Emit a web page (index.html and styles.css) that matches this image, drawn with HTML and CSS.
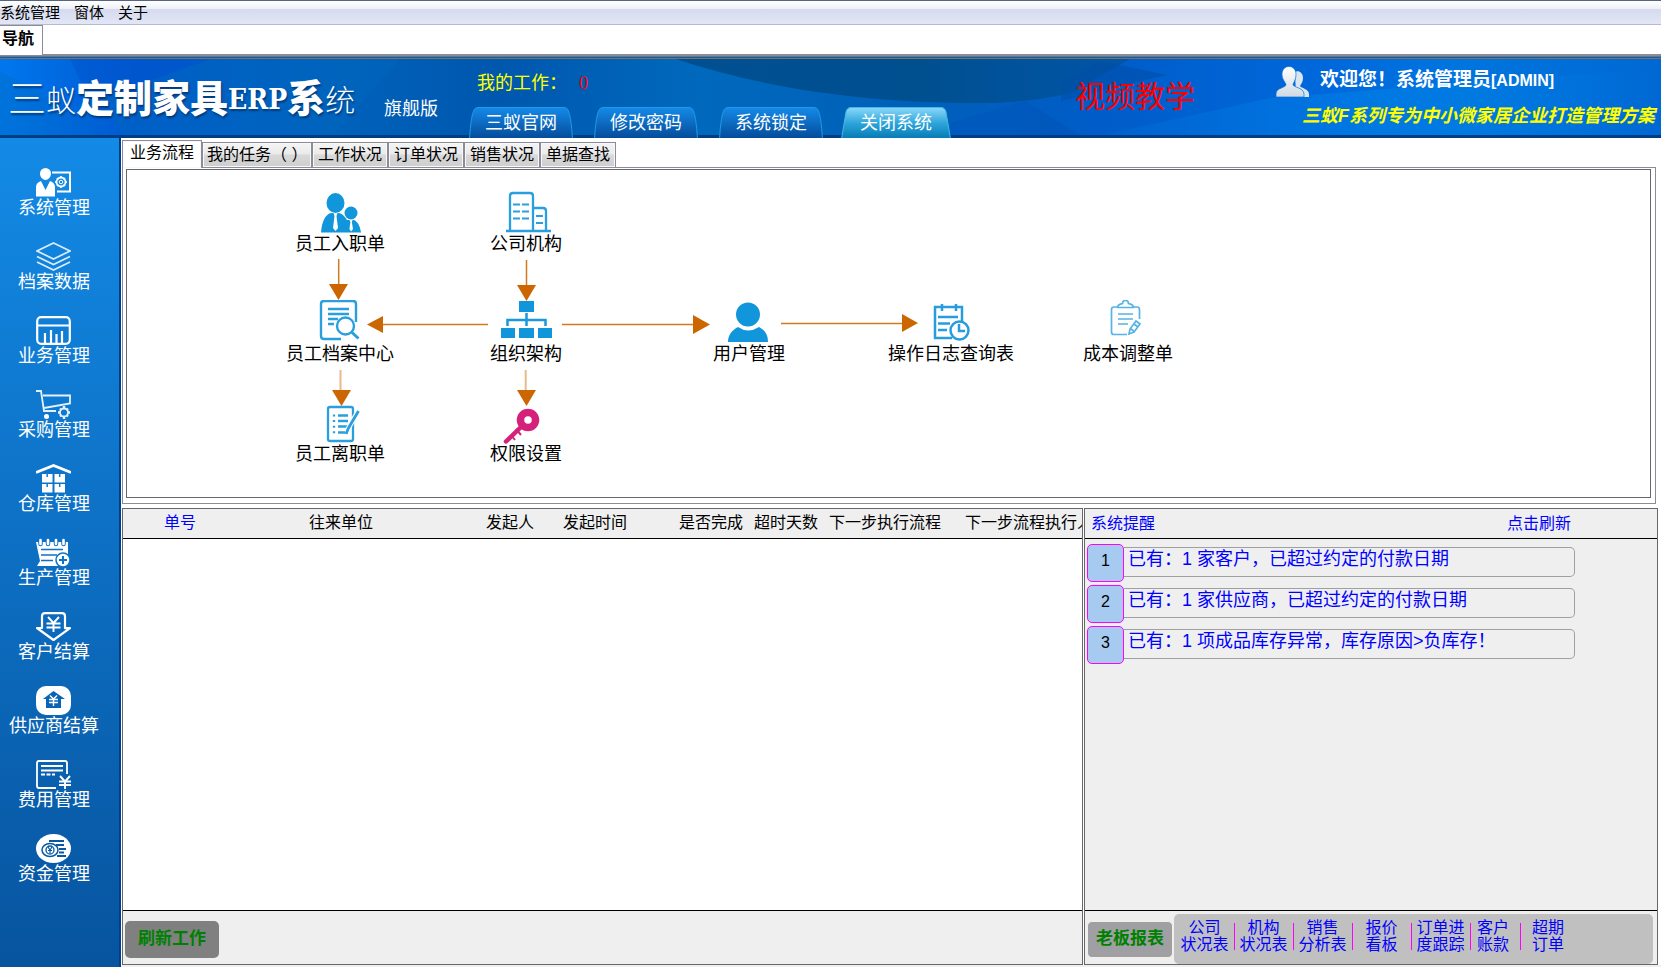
FILE: index.html
```html
<!DOCTYPE html>
<html lang="zh-CN">
<head>
<meta charset="utf-8">
<title>三蚁定制家具ERP系统</title>
<link rel="stylesheet" href="styles.css">
</head>
<body>
<nav class="menubar">
  <button type="button">系统管理</button>
  <button type="button">窗体</button>
  <button type="button">关于</button>
</nav>
<div class="window-tabs"><button type="button" class="window-tab">导航</button></div>

<header class="banner">
  <svg class="banner-art" viewBox="0 0 1661 79" preserveAspectRatio="none" aria-hidden="true">
    <defs>
      <linearGradient id="base"><stop offset="0" stop-color="#0077ee"/><stop offset=".08" stop-color="#0059d0"/><stop offset=".2" stop-color="#0062bc"/><stop offset=".3" stop-color="#0057ae"/><stop offset=".42" stop-color="#0069bd"/><stop offset=".55" stop-color="#0060b8"/><stop offset=".66" stop-color="#005cc8"/><stop offset=".8" stop-color="#0068dc"/><stop offset=".88" stop-color="#0075df"/><stop offset="1" stop-color="#0068d3"/></linearGradient>
      <linearGradient id="ray"><stop offset="0" stop-color="#0071cf"/><stop offset="1" stop-color="#0060b4" stop-opacity="0"/></linearGradient>
      <linearGradient id="arc"><stop offset="0" stop-color="#004f92"/><stop offset=".55" stop-color="#005090"/><stop offset="1" stop-color="#0055a8"/></linearGradient>
      <linearGradient id="glow"><stop offset="0" stop-color="#0085e8" stop-opacity=".1"/><stop offset=".5" stop-color="#0085e8" stop-opacity=".5"/><stop offset="1" stop-color="#0085e8" stop-opacity="0"/></linearGradient>
    </defs>
    <path fill="url(#base)" d="M0 0h1661v79H0z"/>
    <path fill="#0054cc" opacity=".5" d="M70 0h140L90 42z"/>
    <path fill="url(#ray)" opacity=".6" d="M0 12L125 79H0z"/>
    <path fill="#0066be" opacity=".5" d="M100 40L210 0h190L330 79H125z"/>
    <path fill="url(#arc)" d="M676 0C760 28 860 44 980 44q50 0 90-10l60-34z"/>
    <path fill="#0058bc" opacity=".8" d="M950 64l75-22 60 37H950z"/>
    <path fill="#004fa6" opacity=".6" d="M1061 22l40-20 65 14-105 26z"/>
    <path fill="url(#glow)" d="M1090 79l180-40 391-30v70z"/>
    <path fill="#003c82" d="M0 76h1661v3H0z"/>
  </svg>
  <div class="brand">
    <h1 class="logo"><span class="thin wide">三</span><span class="thin">蚁</span><span class="heavy">定制家具</span><span class="latin">ERP</span><span class="heavy">系</span><span class="thin">统</span></h1>
    <span class="edition">旗舰版</span>
  </div>
  <div class="banner-mid">
    <p class="my-work">我的工作：<span class="work-count">0</span></p>
    <div class="banner-tabs">
      <button type="button" class="banner-tab"><svg viewBox="0 0 104 32" aria-hidden="true"><defs><linearGradient id="tb" x2="0" y2="1"><stop offset="0" stop-color="#148ae8"/><stop offset="1" stop-color="#044a98"/></linearGradient><linearGradient id="tl" x2="0" y2="1"><stop offset="0" stop-color="#8ad8fa"/><stop offset=".5" stop-color="#2da5da"/><stop offset="1" stop-color="#0479b4"/></linearGradient></defs><path fill="url(#tb)" stroke="#1f9ae4" d="M.5 32Q2 8 5 3 6 .5 9 .5h86q3 0 4 2.500Q102 8 103.500 32"/></svg><span>三蚁官网</span></button>
      <button type="button" class="banner-tab"><svg viewBox="0 0 104 32" aria-hidden="true"><path fill="url(#tb)" stroke="#1f9ae4" d="M.5 32Q2 8 5 3 6 .5 9 .5h86q3 0 4 2.500Q102 8 103.500 32"/></svg><span>修改密码</span></button>
      <button type="button" class="banner-tab"><svg viewBox="0 0 104 32" aria-hidden="true"><path fill="url(#tb)" stroke="#1f9ae4" d="M.5 32Q2 8 5 3 6 .5 9 .5h86q3 0 4 2.500Q102 8 103.500 32"/></svg><span>系统锁定</span></button>
      <button type="button" class="banner-tab close"><svg viewBox="0 0 110 32" aria-hidden="true"><path fill="url(#tl)" stroke="#45b8e6" d="M.5 32L5 5Q6 .5 10 .5h90q4 0 5 4.500L109.500 32"/></svg><span>关闭系统</span></button>
    </div>
  </div>
  <a class="video" href="#">视频教学</a>
  <div class="user">
    <div class="welcome">
      <svg viewBox="0 0 34 31" width="34" height="31" aria-hidden="true"><defs><linearGradient id="ug" x2="0" y2="1"><stop offset="0" stop-color="#fff"/><stop offset="1" stop-color="#cfd9e4"/></linearGradient></defs><path fill="#d9e6f2" d="M19 6c3-2 8 0 8 6 0 4-2 6-3 8 1 2 9 3 9 8v3H20z"/><path fill="url(#ug)" stroke="#0a72d6" stroke-width=".7" d="M13 .5c4 0 7 3 7 8s-2 7-3 10c0 3 11 3 11 9.500V31H0v-3c0-6.500 10-6 10-9.500-1-3-4-5-4-10s3-8 7-8z"/></svg>
      <span>欢迎您！系统管理员<span class="account">[ADMIN]</span></span>
    </div>
    <p class="slogan">三蚁F系列专为中小微家居企业打造管理方案</p>
  </div>
</header>

<div class="body">
  <nav class="sidebar">
    <button type="button"><svg viewBox="0 0 35 29"><path fill="#fff" d="M9.500 0a5.500 5.500 0 0 1 5.500 5.500c0 3-2 6-5.500 6.500C6 11.500 4 8.500 4 5.500A5.500 5.500 0 0 1 9.500 0zM5 13l4.500 9L14 13c3 1 5 3 5 6v9.500H0V19c0-3 2-5 5-6z"/><path fill="none" stroke="#fff" stroke-width="2" d="M16 4.500h18v19H21"/><circle cx="25" cy="14" r="4.500" fill="none" stroke="#fff" stroke-width="1.800"/><circle cx="25" cy="14" r="1.800" fill="none" stroke="#fff"/><path stroke="#fff" stroke-width="1.500" d="M25 8v2M25 18v2M19 14h2M29 14h2M21 10l1.500 1.500M27.500 16.500L29 18M29 10l-1.500 1.500M22.500 16.500L21 18"/></svg><span>系统管理</span></button>
    <button type="button"><svg viewBox="0 0 35 29"><g fill="none" stroke="#d8ecfc" stroke-width="1.700"><path d="M17.500 1L34 9l-16.500 8L1 9zM1 14.500l16.500 8 16.500-8M1 20l16.500 8L34 20"/></g></svg><span>档案数据</span></button>
    <button type="button"><svg viewBox="0 0 35 29"><g fill="none" stroke="#fff" stroke-width="2.200"><rect x="1.200" y="1.200" width="32.600" height="26.600" rx="4"/><path d="M1 9.500h33M9 28V17M15 28V14M20.500 28V18M26 28V15"/></g></svg><span>业务管理</span></button>
    <button type="button"><svg viewBox="0 0 35 29"><g fill="none" stroke="#e3f1fd" stroke-width="1.800"><path d="M0 1h5l3 20h12M7 5.500h27v8L8 18"/><circle cx="28" cy="22.500" r="4"/><path stroke-width="2.400" d="M28 16v2.500M28 26.500V29M22 22.500h2M32 22.500h2M24 18.500l1 1M31 25.500l1 1M32 18.500l-1 1M25 25.500l-1 1"/></g><circle cx="10.500" cy="26.500" r="2.500" fill="#fff"/></svg><span>采购管理</span></button>
    <button type="button"><svg viewBox="0 0 35 29"><path fill="none" stroke="#fff" stroke-width="2.800" d="M0 8.500L17.500 1.500 35 8.500"/><g fill="#fff"><path d="M6 10h10.500v8.500H6zM18.500 10H29v8.500H18.500zM6 20h10.500v8.500H6zM18.500 20H29v8.500H18.500z"/></g><path stroke="#117ad2" stroke-width="1.500" d="M11.200 9v4M23.700 9v4M11.200 20v3M23.700 20v3"/></svg><span>仓库管理</span></button>
    <button type="button"><svg viewBox="0 0 35 29"><path fill="#fff" d="M0 4h32v24H1l3-5z"/><g stroke="#0f72c9" stroke-width="4.500" stroke-linecap="round"><path d="M4.500 2v4M12 2v4M20 2v4M27.500 2v4"/></g><g stroke="#fff" stroke-width="2.600" stroke-linecap="round"><path d="M4.500 2v4M12 2v4M20 2v4M27.500 2v4"/></g><path stroke="#0f72c9" stroke-width="1.500" d="M5 11.500h22M5 17h16M5 22.500h12"/><circle cx="27" cy="22" r="7" fill="#fff" stroke="#0f72c9" stroke-width="1.500"/><path stroke="#0f72c9" stroke-width="2" d="M27 18v8M23 22h8"/></svg><span>生产管理</span></button>
    <button type="button"><svg viewBox="0 0 35 29"><g fill="none" stroke="#fff" stroke-width="2.200"><path stroke-linejoin="round" d="M9 1.200h17q3 0 3 3v12h5L17.500 28 1 16h5V4q0-2.800 3-2.800z"/><path stroke-width="1.900" d="M12 5l5.500 6L23 5M10.500 11.500h14M10.500 15.500h14M17.500 11v9"/></g></svg><span>客户结算</span></button>
    <button type="button"><svg viewBox="0 0 35 29"><rect width="35" height="29" rx="10" fill="#fff"/><path fill="#0a64b6" d="M17.500 5L29 13h-4v9H10v-9H7z"/><path fill="none" stroke="#fff" stroke-width="1.400" d="M14 9.500l3.500 3.500L21 9.500M13 13.500h9M13 16.500h9M17.500 13v7"/></svg><span>供应商结算</span></button>
    <button type="button"><svg viewBox="0 0 35 29"><g fill="none" stroke="#fff" stroke-width="1.800"><path d="M31 14V3q0-2-2-2H3Q1 1 1 3v23q0 2 2 2h17M5 6h22M5 10.500h22"/><path stroke-dasharray="4 1.500" d="M5 14.500h14"/><path stroke-width="1.900" d="M24 16l5 5.500L34 16M23 21.500h12M23 25h12M29 21v8"/></g></svg><span>费用管理</span></button>
    <button type="button"><svg viewBox="0 0 35 29"><ellipse cx="17.500" cy="14.500" rx="17.500" ry="14.500" fill="#fff"/><g fill="none" stroke="#0858a4"><ellipse cx="14" cy="16" rx="8" ry="6.500" stroke-width="1.500"/><circle cx="14" cy="16" r="4" stroke-width="1.300"/><path stroke-width="1.200" d="M12 13l2 3 2-3M14 16v3M12 16.500h4"/><path stroke-width="2" d="M13 7h15M20 11h8M23 15h7M23 18.500h5M21 22h9"/></g></svg><span>资金管理</span></button>
  </nav>

  <main class="main">
    <section class="workspace">
      <div class="tabs" role="tablist">
        <button type="button" role="tab" aria-selected="true" class="tab active">业务流程</button>
        <button type="button" role="tab" class="tab tasks">我的任务（ ）</button>
        <button type="button" role="tab" class="tab">工作状况</button>
        <button type="button" role="tab" class="tab">订单状况</button>
        <button type="button" role="tab" class="tab">销售状况</button>
        <button type="button" role="tab" class="tab">单据查找</button>
      </div>
      <div class="tab-page">
        <div class="canvas">
          <svg class="arrows" viewBox="127 171 1100 327" width="1100" height="327" aria-hidden="true">
            <g fill="none" stroke="#d17a1e" stroke-width="1.500"><path d="M338.700 260v26M526.500 261v26M383 325.500h105M562 325.500h131M781 324.500h121"/><path stroke="#e8b98c" stroke-width="2" d="M340.500 371v21M525.700 371v21"/></g>
            <path fill="#cc6600" d="M329 285h19l-9.500 16zM517 286h19l-9.500 16zM383 317v17l-16-8.500zM693 316v19l17-9.500zM902 315v18l16-9zM332 391h19l-9.500 16zM517 391h19l-9.500 16z"/>
          </svg>
          <button type="button" class="node hire"><svg viewBox="312 191 56 44"><g fill="#1296db"><ellipse cx="335.500" cy="204" rx="9" ry="10"/><circle cx="351" cy="214" r="6.500"/><path d="M321 233.500c1-11 4-18 10-19.500h8c4 1 6 4 8 7h7c4 2 6 6 7 12.500z"/></g><path fill="#fff" d="M333.500 214h4l-1 3 1.500 12-2.500 3-2.500-3 1.500-12zM349.500 221h3l-.7 2 1.200 7-1.800 2.500-1.800-2.500 1-7z"/></svg><span>员工入职单</span></button>
          <button type="button" class="node company"><svg viewBox="498 191 56 44"><g fill="none" stroke="#2a9fde" stroke-width="2.300"><path d="M510 232v-35q0-3 3-3h17q3 0 3 3v35M534 209h9q3 0 3 3v20M506 232h45"/><path stroke-width="2" d="M513 205.500h7M522 205.500h7M513 212.500h7M522 212.500h7M513 219.500h7M522 219.500h7M536 217h7M536 224h7"/></g></svg><span>公司机构</span></button>
          <button type="button" class="node archive"><svg viewBox="312 301 56 44"><g fill="none" stroke="#2a9fde" stroke-width="2.400"><path d="M356 323v-18q0-3-3-3h-29q-3 0-3 3v32q0 3 3 3h17M328 310h21M328 315h21M328 320h10M328 325h6"/><circle cx="345.500" cy="327" r="8.500"/><path stroke-width="3" d="M351.500 333l7 6.500"/></g></svg><span>员工档案中心</span></button>
          <button type="button" class="node org"><svg viewBox="498 301 56 44"><path fill="#1296db" d="M519 302h15v11h-15zM501 329h14v10h-14zM519 329h15v10h-15zM538 329h14v10h-14z"/><path fill="none" stroke="#1a98dc" stroke-width="2.500" d="M526.500 314v13M507.500 327v-6h38v6"/></svg><span>组织架构</span></button>
          <button type="button" class="node users"><svg viewBox="721 301 56 44"><path fill="#1296db" d="M748 303.500a12 12 0 1 1 0 24 12 12 0 0 1 0-24zM738 328q10 7 21 0c6 3 9 8 9 15h-40c0-7 4-12 10-15z"/></svg><span>用户管理</span></button>
          <button type="button" class="node log"><svg viewBox="923 301 56 44"><g fill="none" stroke="#269ddd" stroke-width="2.500"><path d="M962 322v-14h-27v31h17M942 305v7M956 305v7M938 318h20M938 324.500h12M938 331h9"/><circle cx="959.500" cy="331.500" r="9"/><path d="M959 325v7h6"/></g></svg><span>操作日志查询表</span></button>
          <button type="button" class="node cost"><svg viewBox="1100 301 56 44"><g fill="none" stroke="#55b3e5" stroke-width="1.700"><path d="M1117 308h-3q-2.500 0-2.500 2.500V333q0 2.500 2.500 2.500h13M1132 308h5q2.500 0 2.500 2.500V320M1117.500 308.500c0-3 3-3.500 5-4 0-4 6-4 6 0 2 .5 5 1 5 4zM1118 315h15M1118 320h15M1118 325h10"/><path d="M1129 335l1-5 6-8 4 3-6 8zM1131 330l4 3M1134 325l4 3"/></g></svg><span>成本调整单</span></button>
          <button type="button" class="node leave"><svg viewBox="312 401 56 44"><g fill="none" stroke="#2a9fde" stroke-width="2.300"><rect x="328" y="408" width="25" height="34" rx="2"/><path d="M338 416.500h10M338 422h10M338 427.500h10M338 433.500h7"/><path stroke-dasharray="2 3.600" d="M334 415.500v20"/><path stroke="#fff" stroke-width="5" d="M357 414l-9 16"/><path stroke-width="2.800" d="M358.500 412l-10 17-2.500 6"/></g></svg><span>员工离职单</span></button>
          <button type="button" class="node rights"><svg viewBox="498 401 56 44"><circle cx="528" cy="421" r="7.500" fill="none" stroke="#d6217b" stroke-width="7.500"/><path stroke="#d6217b" stroke-width="4.500" stroke-linecap="round" fill="none" d="M521 428l-15 14.500"/><path stroke="#d6217b" stroke-width="2" d="M516 430l5 6M511 436l4 5"/></svg><span>权限设置</span></button>
        </div>
      </div>
    </section>

    <section class="lower">
      <div class="pane">
        <div class="list">
          <table>
            <colgroup><col class="c1"><col class="c2"><col class="c3"><col class="c4"><col class="c5"><col class="c5"><col class="c6"><col></colgroup>
            <thead><tr><th class="key">单号</th><th>往来单位</th><th>发起人</th><th>发起时间</th><th>是否完成</th><th>超时天数</th><th>下一步执行流程</th><th>下一步流程执行人</th></tr></thead>
          </table>
        </div>
        <div class="pane-foot"><button type="button" class="refresh">刷新工作</button></div>
      </div>
      <div class="pane notices">
        <div class="pane-head"><h2>系统提醒</h2><button type="button" class="link">点击刷新</button></div>
        <ol class="notice-list">
          <li><span class="num">1</span><a href="#">已有：1 家客户，已超过约定的付款日期</a></li>
          <li><span class="num">2</span><a href="#">已有：1 家供应商，已超过约定的付款日期</a></li>
          <li><span class="num">3</span><a href="#">已有：1 项成品库存异常，库存原因&gt;负库存！</a></li>
        </ol>
        <div class="pane-foot reports">
          <button type="button" class="boss">老板报表</button>
          <div class="report-links">
            <a href="#">公司<br>状况表</a><a href="#">机构<br>状况表</a><a href="#">销售<br>分析表</a><a href="#">报价<br>看板</a><a href="#">订单进<br>度跟踪</a><a href="#" class="narrow">客户<br>账款</a><a href="#" class="last">超期<br>订单</a>
          </div>
        </div>
      </div>
    </section>
  </main>
</div>
</body>
</html>
```
FILE: styles.css
```css
* { box-sizing: border-box; }

body {
  margin: 0;
  min-height: 100vh;
  display: flex;
  flex-direction: column;
  background: #f0f0f0;
  color: #000;
  font: 16px/20px "Liberation Sans", "Noto Sans CJK SC", sans-serif;
  overflow-x: hidden;
}

button {
  margin: 0;
  padding: 0;
  border: 0;
  background: none;
  color: inherit;
  font: inherit;
  cursor: pointer;
  white-space: nowrap;
}

a { color: inherit; text-decoration: none; }
h1, h2, p, ol { margin: 0; padding: 0; font-size: inherit; font-weight: normal; }

/* Window menu and document tabs */
.menubar {
  display: flex;
  gap: 14px;
  height: 25px;
  padding-top: 1px;
  border-top: 1px solid #56657c;
  border-bottom: 1px solid #b6bccb;
  background: linear-gradient(#fff, #eceff8 36%, #d5dbee 37%, #e2e7f6);
  font-size: 15px;
}

.window-tabs {
  height: 31px;
  background: #fff;
  border-bottom: 2px solid #8c8c99;
}

.window-tab {
  height: 30px;
  width: 43px;
  padding: 0 0 4px 2px;
  border: 1px solid #8c8c99;
  border-width: 1px 1px 0 0;
  background: #fff;
  font-weight: bold;
  text-align: left;
}

/* Banner */
.banner {
  position: relative;
  display: grid;
  grid-template-columns: 469px 606px 1fr 385px;
  height: 82px;
  border-top: 3px double #77736f;
  background: #0062bc;
  color: #fff;
  overflow: hidden;
}

.banner > * { position: relative; }

.banner .banner-art {
  position: absolute;
  inset: 0;
  width: 100%;
  height: 100%;
}

.brand { display: flex; padding-left: 8px; }

.logo {
  display: flex;
  align-items: center;
  width: 376px;
  line-height: 76px;
  text-shadow: 1px 2px 2px #003a7a;
}

.logo .thin { font-size: 30px; padding-top: 4px; font-weight: 300; }
.logo .wide { font-size: 38px; padding: 0; }
.logo .heavy { font-size: 38px; font-weight: 900; }
.logo .latin { font: bold 28px "DejaVu Serif Condensed", "DejaVu Serif", serif; }

.edition { padding-top: 39px; font-size: 18px; line-height: 22px; }

.banner-mid { display: flex; flex-direction: column; justify-content: space-between; }

.my-work { padding: 13px 0 0 8px; font-size: 18px; line-height: 22px; color: #ff0; }
.work-count { margin-left: 12px; font-family: "Liberation Serif", serif; color: #f00; }

.banner-tabs { display: flex; gap: 21px; }

.banner-tab {
  position: relative;
  width: 104px;
  height: 32px;
  font-size: 18px;
  line-height: 32px;
}

.banner-tab svg { position: absolute; inset: 0; width: 100%; height: 100%; }
.banner-tab span { position: relative; }
.banner-tab.close { width: 110px; line-height: 30px; margin-left: -3px; }

.video { padding-top: 18px; font-size: 30px; line-height: 40px; color: #f00; }

.user { padding-top: 7px; white-space: nowrap; }
.welcome { display: flex; gap: 10px; height: 31px; font-size: 19px; line-height: 28px; font-weight: bold; }
.welcome svg { flex: none; }
.account { font-size: 16px; }
.slogan { padding: 8px 0 0 26px; font-size: 18px; line-height: 22px; font-weight: bold; font-style: italic; color: #ff0; }

/* Sidebar and main area */
.body { flex: 1; display: flex; }

.sidebar {
  flex: none;
  width: 121px;
  display: flex;
  flex-direction: column;
  gap: 22px;
  padding: 30px 13px 24px 0;
  border-right: 2px solid #00408a;
  background: linear-gradient(#138ae6, #07549f);
  color: #fff;
  font-size: 18px;
}

.sidebar button { display: flex; flex-direction: column; align-items: center; }
.sidebar svg { width: 35px; height: 29px; }
.sidebar span { padding-left: 2px; line-height: 23px; }

.main {
  flex: 1;
  min-width: 0;
  display: flex;
  flex-direction: column;
  padding-left: 1px;
  background: #fff;
  margin-bottom: 2px;
}

.workspace { padding: 2px 5px 0 0; }

.tabs { display: flex; align-items: flex-end; height: 28px; }

.tab {
  width: 76px;
  height: 26px;
  border: 1px solid #8c8c99;
  background: linear-gradient(#f4f4f4, #ebebeb 45%, #d9d9d9 50%, #cecece);
  box-shadow: inset 0 0 0 1px #f8f8f8;
  line-height: 22px;
}

.tab.tasks { width: 110px; text-align: left; padding-left: 4px; }

.tab.active {
  position: relative;
  z-index: 1;
  width: 80px;
  height: 28px;
  padding-bottom: 4px;
  border-bottom: 0;
  background: #fff;
}

.tab-page {
  margin-top: -1px;
  padding: 1px 4px 5px 3px;
  border: 1px solid #8c8c99;
}

.canvas { position: relative; height: 329px; border: 1px solid #66666b; overflow: hidden; }
.arrows { position: absolute; left: 0; top: 0; }

/* Flow-chart nodes */
.node {
  position: absolute;
  display: flex;
  flex-direction: column;
  align-items: center;
  transform: translateX(-50%);
  font-size: 18px;
  line-height: 20px;
}

.node svg { width: 56px; height: 44px; }
.hire { left: 213px; top: 20px; }
.company { left: 399px; top: 20px; }
.archive { left: 213px; top: 130px; }
.org { left: 399px; top: 130px; }
.users { left: 622px; top: 130px; }
.log { left: 824px; top: 130px; }
.cost { left: 1001px; top: 130px; }
.leave { left: 213px; top: 230px; }
.rights { left: 399px; top: 230px; }

/* Lower panes */
.lower {
  flex: 1;
  display: grid;
  grid-template-columns: 961fr 574fr;
  gap: 1px;
  padding: 4px 3px 0 0;
}

.pane {
  min-width: 0;
  display: flex;
  flex-direction: column;
  border: 1px solid #66666b;
  background: #efefef;
}

.list { flex: 1; background: #fff; overflow: hidden; }
.list table { width: 100%; table-layout: fixed; border-collapse: separate; border-spacing: 0; }

.list th {
  height: 30px;
  padding: 0 0 1px;
  border-bottom: 1px solid #000;
  background: #efefef;
  font-weight: normal;
  text-align: left;
  white-space: nowrap;
  overflow: hidden;
}

.list th.key { padding-left: 41px; color: #00f; }
.c1 { width: 186px; }
.c2 { width: 177px; }
.c3 { width: 77px; }
.c4 { width: 116px; }
.c5 { width: 75px; }
.c6 { width: 136px; }

.pane-foot {
  display: flex;
  align-items: center;
  height: 54px;
  padding: 3px 0 0 2px;
  border-top: 1px solid #000;
}

.refresh {
  width: 94px;
  height: 37px;
  border-radius: 5px;
  background: #808080;
  color: #008000;
  font-size: 17px;
  font-weight: bold;
}

.pane-head {
  display: flex;
  justify-content: space-between;
  height: 30px;
  padding: 0 86px 0 6px;
  border-bottom: 1px solid #000;
  color: #00f;
  line-height: 29px;
}

.notice-list {
  flex: 1;
  display: flex;
  flex-direction: column;
  gap: 3px;
  padding: 5px 82px 0 2px;
  list-style: none;
}

.notice-list li { display: flex; align-items: center; height: 38px; }

.num {
  flex: none;
  width: 37px;
  height: 38px;
  border: 1px solid #f0f;
  border-radius: 5px;
  background: #a6caf0;
  line-height: 32px;
  text-align: center;
}

.notice-list a {
  flex: 1;
  height: 30px;
  margin-bottom: 2px;
  padding-left: 4px;
  border: 1px solid #a0a0a0;
  border-left: 0;
  border-radius: 0 5px 5px 0;
  color: #00f;
  font-size: 18px;
  line-height: 23px;
  white-space: nowrap;
}

.boss {
  flex: none;
  width: 86px;
  height: 37px;
  margin-right: 1px;
  border: 1px solid #f6f0e4;
  border-radius: 5px;
  background: #a0a0a4;
  color: #008000;
  font-size: 17px;
  font-weight: bold;
}

.reports { padding-right: 4px; }

.report-links {
  flex: 1;
  display: flex;
  align-items: center;
  height: 50px;
  padding: 0 0 6px 1px;
  border-radius: 5px;
  background: #c0c0c0;
  color: #00f;
  line-height: 17px;
  text-align: center;
}

.report-links a { position: relative; width: 59px; white-space: nowrap; }
.report-links .narrow { width: 50px; padding-right: 4px; }
.report-links .last { width: 56px; }

.report-links a + a::before {
  content: "";
  position: absolute;
  left: 0;
  top: 4px;
  height: 27px;
  border-left: 1px solid #f0f;
}
```
